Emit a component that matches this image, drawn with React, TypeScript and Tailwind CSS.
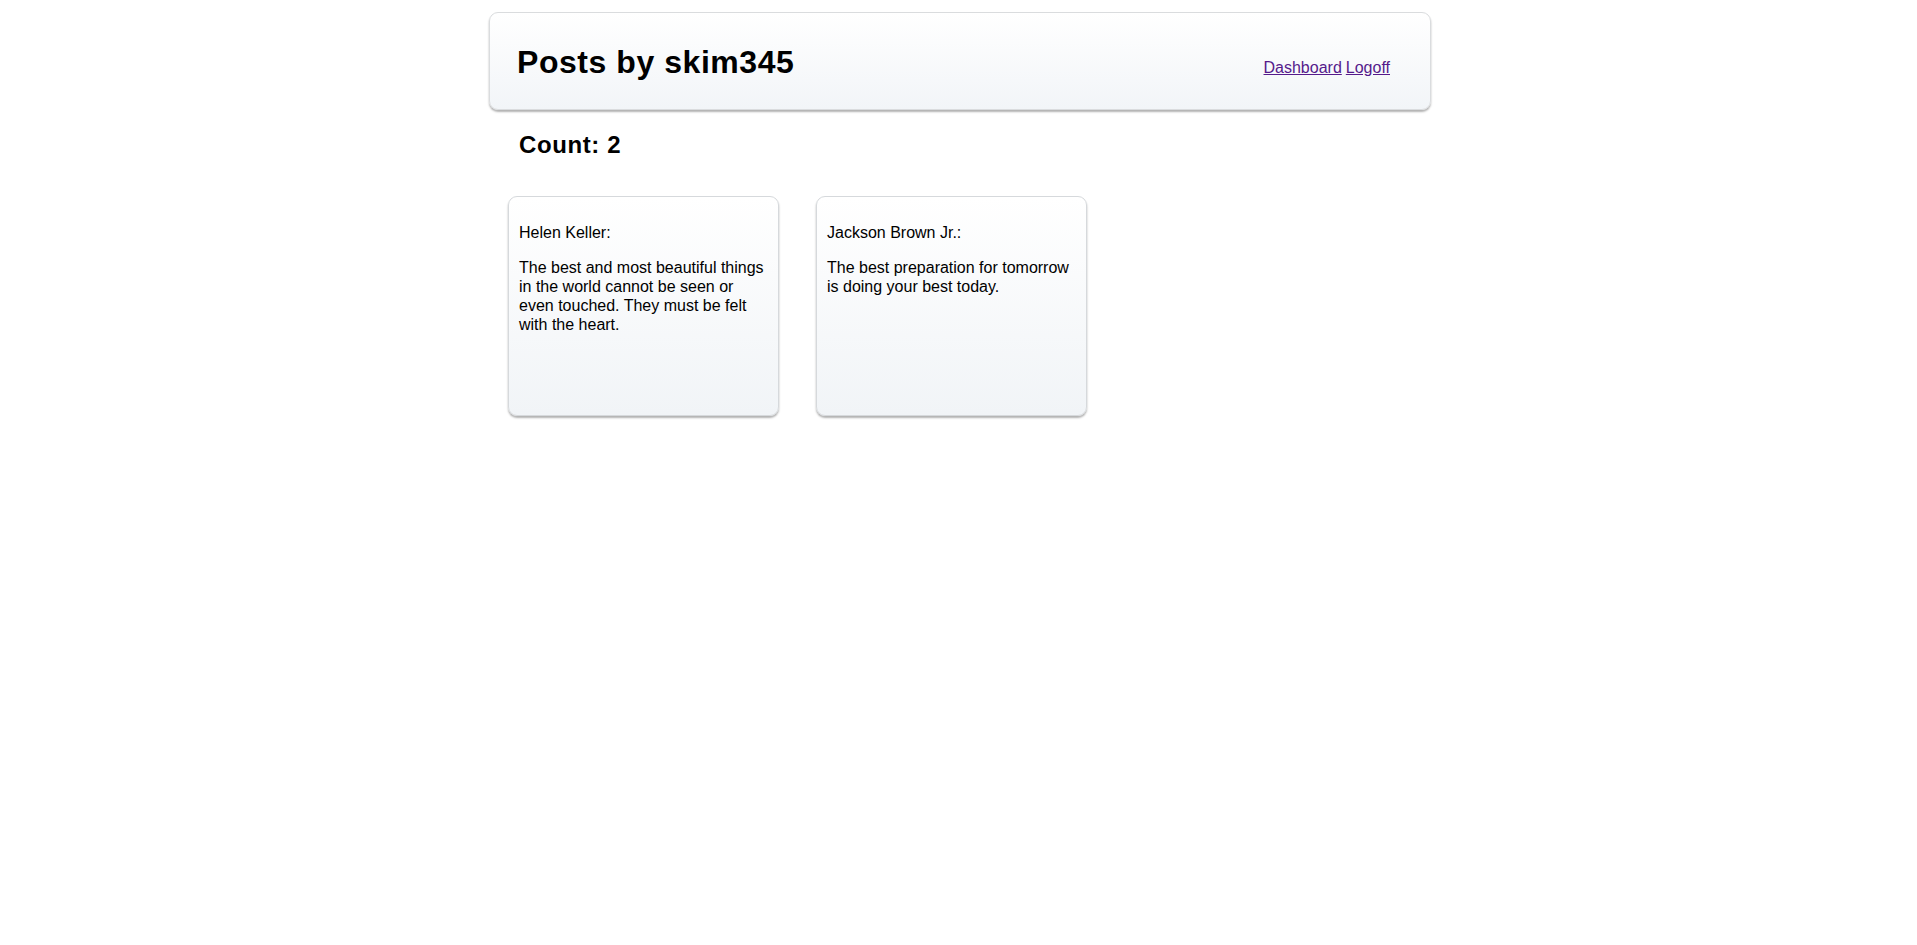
const posts = [
  { author: "Helen Keller", text: "The best and most beautiful things in the world cannot be seen or even touched. They must be felt with the heart." },
  { author: "Jackson Brown Jr.", text: "The best preparation for tomorrow is doing your best today." },
];

function PostCard({ author, text }: { author: string; text: string }) {
  return (
    <div className="w-[271px] h-[220px] box-border border border-[#d6d9dc] rounded-[9px] bg-gradient-to-b from-white to-[#f1f4f7] shadow-[0_2px_2px_rgba(0,0,0,0.3)] px-[10px] py-[10px] text-[16px] leading-[19px] text-black">
      <p className="my-4">{author}:</p>
      <p className="my-4">{text}</p>
    </div>
  );
}

export default function App() {
  return (
    <div className="min-h-screen bg-white pl-[3px] font-['Liberation_Sans',Arial,sans-serif] text-black">
      <div className="w-[942px] mx-auto pt-3">
        <header className="flex items-baseline justify-between border border-[#dadcde] rounded-[9px] bg-gradient-to-b from-white to-[#f2f5f8] shadow-[0_2px_2px_rgba(0,0,0,0.3)] pl-[27px] pr-10 pt-[30px] pb-[28px]">
          <h1 className="text-[32px] leading-[38px] font-bold tracking-[0.55px]">Posts by skim345</h1>
          <nav className="text-[16px] leading-[19px] flex gap-[4px]">
            <a href="#" className="underline text-[#551a8b]">Dashboard</a>
            <a href="#" className="underline text-[#551a8b]">Logoff</a>
          </nav>
        </header>
        <h2 className="mt-[20px] pl-[30px] text-[24px] leading-[29px] font-bold tracking-[0.6px]">Count: {posts.length}</h2>
        <div className="flex gap-[37px] ml-[19px] mt-[37px]">
          {posts.map((p) => (
            <PostCard key={p.author} author={p.author} text={p.text} />
          ))}
        </div>
      </div>
    </div>
  );
}
